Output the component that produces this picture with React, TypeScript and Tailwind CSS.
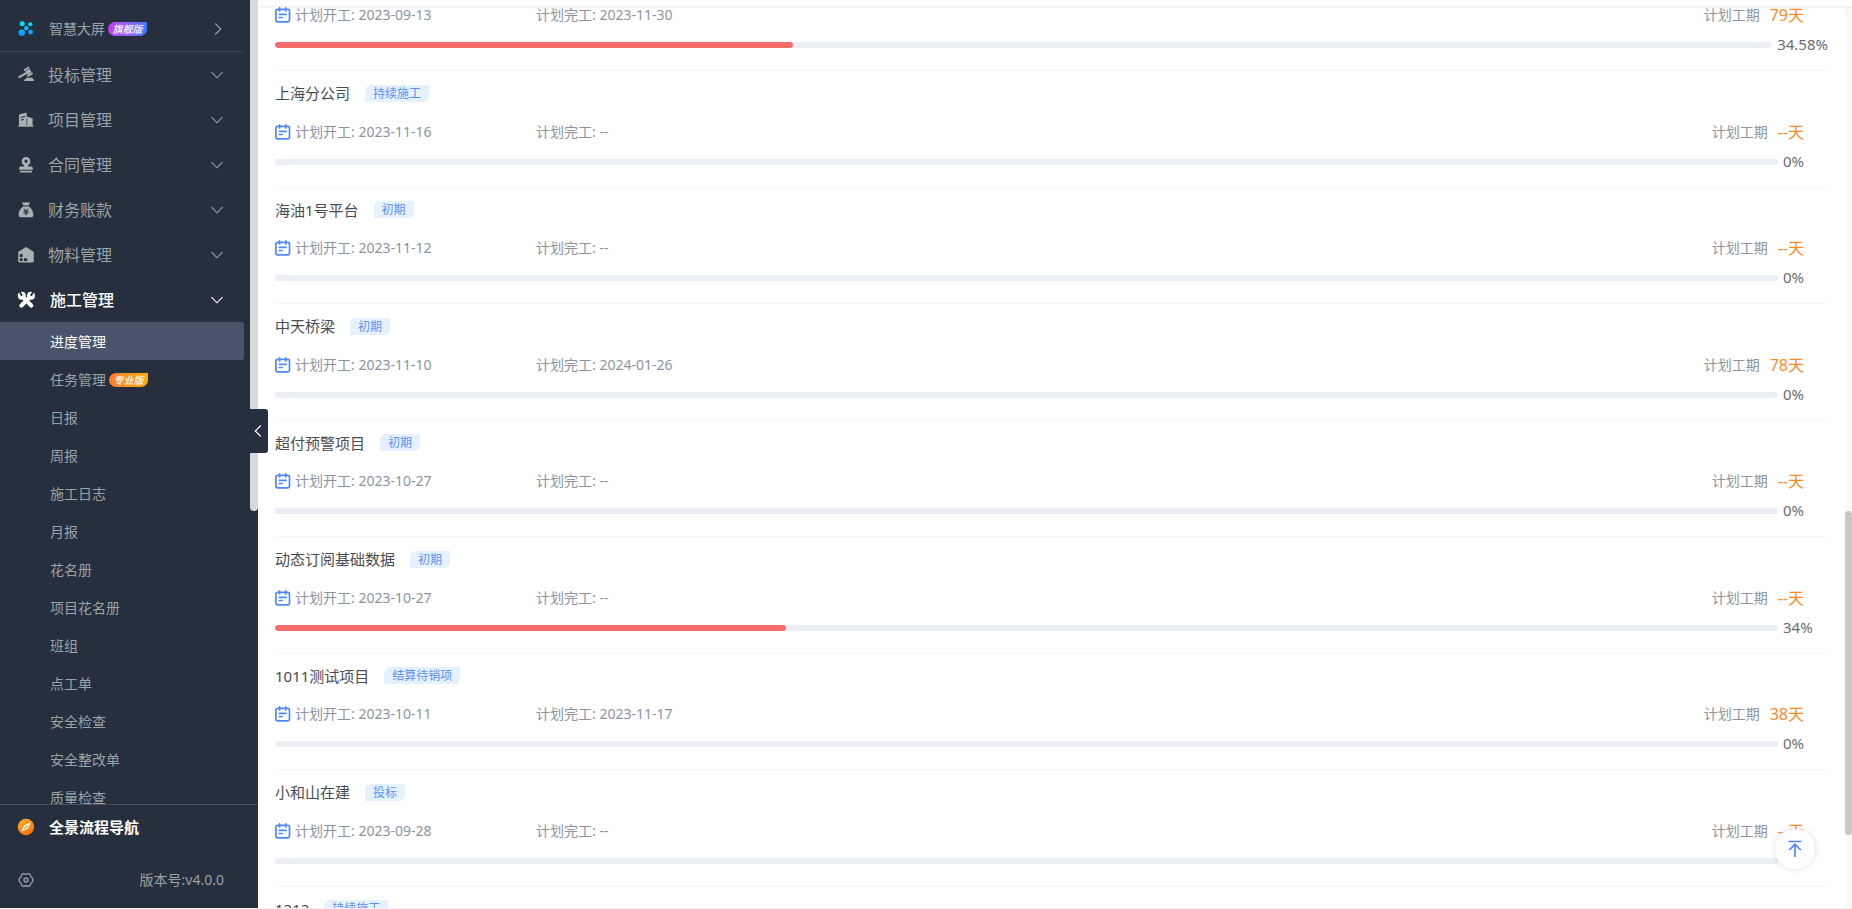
import React from "react";

const font = "font-['Noto_Sans','Noto_Sans_CJK_SC',sans-serif]";

function Chevron({ className = "size-3" }: { className?: string }) {
  return (
    <svg viewBox="0 0 12 12" className={className} fill="none" stroke="currentColor" strokeWidth="1.1" aria-hidden="true">
      <path d="M0.5 3.2 6 8.8 11.5 3.2" />
    </svg>
  );
}

const icons: Record<string, React.ReactNode> = {
  bid: (
    <g fill="currentColor">
      <g transform="rotate(-30 10.3 4.7)">
        <rect x="7.2" y="0.4" width="6.2" height="1.9" rx="0.6" />
        <rect x="7.8" y="2.7" width="5" height="4" />
        <rect x="7.2" y="7.1" width="6.2" height="1.9" rx="0.6" />
      </g>
      <path d="M8 4.900 9 7 1.700 10.900c-.6.200-1.100.100-1.400-.4-.2-.5 0-1 .4-1.300z" />
      <path d="M8.400 10.800h6l.6 1.400h.8v1.800H6.300v-1.800h1.400z" />
    </g>
  ),
  project: (
    <path fill="currentColor" fillRule="evenodd" d="M1 2.4 8.6.5v4.1l6 1.6v7.3h.8v1.300H.3v-1.300H1zM2.600 5v1l4.600-.9v-1zM2.600 7.500v1l3.400-.6v-1zM8.600 6v7.500h.6V6.200z" />
  ),
  contract: (
    <path fill="currentColor" fillRule="evenodd" d="M8 0a4.300 4.300 0 0 1 2.200 8L9.900 9.500h3.300c1 0 1.600.6 1.600 1.500v1.800H1.200V11c0-.9.600-1.500 1.600-1.500h3.300L5.800 8A4.300 4.300 0 0 1 8 0zm0 2.600a1.600 1.600 0 1 0 0 3.200 1.600 1.600 0 0 0 0-3.200zM2 13.800h12v1.600H2z" />
  ),
  finance: (
    <path fill="currentColor" fillRule="evenodd" d="M4 0 6 .7 8 0l2 .7L12 0l-1.300 3.500H5.300zM5 4.400h6c2.700 2 4.400 5 4.400 8.300 0 1.700-1 2.600-2.500 2.600H3.100C1.600 15.300.6 14.400.6 12.700.6 9.400 2.300 6.400 5 4.400zm.4 2.300L7 8.900H5.400v.9h2v.8h-2v.9h2v1.700h1.200v-1.700h2v-.9h-2v-.8h2v-.9H9l1.600-2.200H9.300L8 8.600 6.700 6.700z" />
  ),
  material: (
    <path fill="currentColor" fillRule="evenodd" d="M8 0 15.200 4.500c.4.200.6.500.6 1V14c0 .9-.5 1.400-1.400 1.400H1.600C.7 15.400.2 14.900.2 14V5.500c0-.5.2-.8.6-1zM1.800 7v3h2.800V7zM1.800 11.300V14h2.800v-2.700zM6 11.300V14h3.200v-2.700z" />
  ),
  build: (
    <g strokeLinecap="round">
      <path stroke="currentColor" strokeWidth="4.200" d="m4 4 9.300 9.600M12.800 4 3.400 13.600" />
      <circle cx="3.800" cy="3.700" r="4" fill="currentColor" />
      <circle cx="13" cy="3.700" r="4" fill="currentColor" />
      <path className="stroke-[#262f3e]" strokeWidth="2" strokeLinecap="butt" d="M4 3.700 1.300-.8M12.800 3.700 15.700-.8" />
    </g>
  ),
};

const menu = [
  { icon: "bid", label: "投标管理" },
  { icon: "project", label: "项目管理" },
  { icon: "contract", label: "合同管理" },
  { icon: "finance", label: "财务账款" },
  { icon: "material", label: "物料管理" },
  { icon: "build", label: "施工管理", open: true },
];

const submenu = [
  "进度管理", "任务管理", "日报", "周报", "施工日志", "月报", "花名册",
  "项目花名册", "班组", "点工单", "安全检查", "安全整改单", "质量检查",
];

type Project = { name?: string; stage?: string; start?: string; end?: string; days?: string; progress: number };

const projects: Project[] = [
  { start: "2023-09-13", end: "2023-11-30", days: "79", progress: 34.58 },
  { name: "上海分公司", stage: "持续施工", start: "2023-11-16", progress: 0 },
  { name: "海油1号平台", stage: "初期", start: "2023-11-12", progress: 0 },
  { name: "中天桥梁", stage: "初期", start: "2023-11-10", end: "2024-01-26", days: "78", progress: 0 },
  { name: "超付预警项目", stage: "初期", start: "2023-10-27", progress: 0 },
  { name: "动态订阅基础数据", stage: "初期", start: "2023-10-27", progress: 34 },
  { name: "1011测试项目", stage: "结算待销项", start: "2023-10-11", end: "2023-11-17", days: "38", progress: 0 },
  { name: "小和山在建", stage: "投标", start: "2023-09-28", progress: 0 },
  { name: "1212", stage: "持续施工", progress: 0 },
];

function Badge({ children, className }: { children: React.ReactNode; className: string }) {
  return (
    <span className={`flex h-[14px] w-[39px] items-center justify-center rounded-l-full rounded-br-full text-[10px] leading-none font-medium text-white italic ${className}`}>
      {children}
    </span>
  );
}

function Sidebar() {
  return (
    <aside className="relative flex h-full w-[258px] shrink-0 flex-col bg-[#262f3e] text-[#9aa3a6]">
      <nav className="min-h-0 flex-1 overflow-hidden">
        <a href="#screen" className="mr-[14px] flex h-[52px] items-center border-b border-[#3a4352] pt-1.5 pl-[18px] text-sm">
          <svg viewBox="0 0 16 16" className="mr-[15px] size-4" aria-hidden="true">
            <defs>
              <linearGradient id="dots" gradientUnits="userSpaceOnUse" x1="0" y1="0" x2="0" y2="16">
                <stop stopColor="#00f0ff" />
                <stop offset="1" stopColor="#0a8cff" />
              </linearGradient>
            </defs>
            <g fill="url(#dots)">
              <circle cx="4.200" cy="2.800" r="2.500" />
              <circle cx="12.200" cy="3.300" r="2.100" />
              <circle cx="8.300" cy="7.300" r="2.200" />
              <circle cx="3.800" cy="11.800" r="3.200" />
              <circle cx="12.600" cy="11.100" r="2.400" />
            </g>
          </svg>
          智慧大屏
          <Badge className="ml-[3px] bg-gradient-to-r from-[#c43df0] to-[#3478ff]">旗舰版</Badge>
          <Chevron className="mr-5 ml-auto size-3 -rotate-90" />
        </a>
        <ul>
          {menu.map((m) => (
            <li key={m.label}>
              <button type="button" className={`flex h-[45px] w-full items-center pl-[18px] text-left text-base ${m.open ? "font-medium text-white" : ""}`}>
                <svg viewBox="0 0 16 16" className="size-4 overflow-visible text-[#a8b0b1] in-[.font-medium]:text-white" aria-hidden="true">{icons[m.icon]}</svg>
                <span className={m.open ? "ml-4" : "ml-[14px]"}>{m.label}</span>
                <Chevron className="mr-[35px] ml-auto size-3" />
              </button>
            </li>
          ))}
        </ul>
        <ul>
          {submenu.map((s, i) => (
            <li key={s}>
              <a
                href={`#${s}`}
                className={`mr-[14px] flex h-[38px] items-center rounded-r-[3px] pt-0.5 pl-[50px] text-sm ${i === 0 ? "bg-[#49536a] text-white" : ""}`}
              >
                {s}
                {i === 1 && <Badge className="ml-[3px] bg-gradient-to-r from-[#ff7a2e] to-[#ffae00]">专业版</Badge>}
              </a>
            </li>
          ))}
        </ul>
      </nav>
      <div className="absolute top-0 right-0 h-[511px] w-2 rounded-b-full bg-[#d8d9db]" />
      <button type="button" aria-label="收起菜单" className="absolute top-[409px] -right-[10px] flex h-11 w-[18px] items-center justify-center rounded-r-[3px] bg-[#262f3e] pr-0.5 text-white">
        <Chevron className="size-3 rotate-90" />
      </button>
      <div className="h-[104px] shrink-0 border-t border-[#49515f]">
        <a href="#guide" className="flex h-11 items-center pl-[17px] text-[15px] font-bold text-white">
          <svg viewBox="0 0 18 18" className="mr-[14px] size-[18px]" aria-hidden="true">
            <defs>
              <linearGradient id="compass" x1="0" y1="0" x2="0.6" y2="1">
                <stop stopColor="#ffb01f" />
                <stop offset="1" stopColor="#ff7410" />
              </linearGradient>
            </defs>
            <circle cx="9" cy="9" r="8.200" fill="url(#compass)" />
            <path d="M13.800 4.200 7.200 7.200 4.400 13.600 10.900 10.800z" fill="#fff" />
            <path d="m7.600 10.600 3-3" stroke="#ff9018" strokeWidth="1.300" strokeLinecap="round" />
          </svg>
          全景流程导航
        </a>
        <div className="flex h-[59px] items-center justify-between pt-0.5 pr-[34px] pl-[18px] text-sm">
          <button type="button" aria-label="设置">
            <svg viewBox="0 0 16 16" className="size-4" fill="none" stroke="currentColor" strokeWidth="1.300" strokeLinejoin="round" aria-hidden="true">
              <path d="M5.700 1.500c1.200.8 3.400.8 4.600 0l2 1.100c0 1.700.9 3 2.400 3.900v3c-1.500.9-2.400 2.200-2.400 3.900l-2 1.100c-1.200-.8-3.400-.8-4.600 0l-2-1.100c0-1.700-.9-3-2.400-3.900v-3c1.500-.9 2.400-2.200 2.400-3.900z" />
              <circle cx="8" cy="8" r="2" />
            </svg>
          </button>
          <span>版本号:v4.0.0</span>
        </div>
      </div>
    </aside>
  );
}

function CalendarIcon() {
  return (
    <svg viewBox="0 0 16 16" className="mr-1 size-4 shrink-0" fill="none" stroke="#4d88ff" strokeWidth="1.700" strokeLinecap="round" aria-hidden="true">
      <rect x="0.900" y="2.300" width="13.600" height="12.600" rx="1.600" />
      <path d="M4.600.9v3M10.800.9v3M4.300 7.300h6.800M4.300 10.500h2.800" />
    </svg>
  );
}

function ProjectRow({ p }: { p: Project }) {
  return (
    <li className="border-b border-[#f5f6f8]">
      {p.name && (
        <div className="mb-4 flex items-center pt-[11px]">
          <h2 className="text-[15px] leading-normal text-[#484c54]">{p.name}</h2>
          <span className="ml-[15px] rounded-tl-md rounded-br-md bg-[#e6f1ff] px-2 text-xs leading-[17px] text-[#5b90ff]">{p.stage}</span>
        </div>
      )}
      <div className="flex h-[22px] items-center text-sm text-[#8b949f]">
        <span className="flex w-[261px] items-center">
          <CalendarIcon />
          计划开工: {p.start ?? "--"}
        </span>
        <span>计划完工: {p.end ?? "--"}</span>
        <span className="ml-auto">计划工期</span>
        <span className="mr-6 ml-[10px] text-base text-[#ff8a1f]">{p.days ?? "--"}天</span>
      </div>
      <div className="mt-2.5 mb-4 flex h-[18px] items-center">
        <div role="progressbar" aria-valuenow={p.progress} className="h-1.5 flex-1 overflow-hidden rounded-full bg-[#ebeef5]">
          <div className="h-full rounded-full bg-[#f56c6c]" style={{ width: `${p.progress}%` }} />
        </div>
        <span className="ml-[5px] min-w-[45px] self-start text-[15px] leading-4 text-[#6b6d71]">{p.progress}%</span>
      </div>
    </li>
  );
}

export default function App() {
  return (
    <div className={`h-screen bg-[#f5f5f5] pb-px ${font}`}>
      <div className="flex h-full bg-white">
        <Sidebar />
        <main className="relative flex min-w-0 flex-1 flex-col overflow-hidden">
          <header className="absolute inset-x-0 top-0 h-1.5 bg-white shadow-[0_1px_3px_rgba(0,0,0,0.08)]" />
          <div className="flex min-h-0 flex-1">
            <ul className="min-w-0 flex-1 overflow-hidden px-[17px] pt-1">
              {projects.map((p, i) => (
                <ProjectRow key={i} p={p} />
              ))}
            </ul>
            <div className="w-[7px] bg-[#f9f9f9] pt-[511px]">
              <div className="h-[324px] rounded-full bg-[#c8c8c8]" />
            </div>
          </div>
          <button type="button" aria-label="回到顶部" className="absolute right-[37px] bottom-[39px] flex size-10 items-center justify-center rounded-full bg-white shadow-[0_0_6px_rgba(0,0,0,0.14)]">
            <svg viewBox="0 0 16 18" className="h-[18px] w-4" fill="none" stroke="#4d88ff" strokeWidth="1.700" aria-hidden="true">
              <path d="M1.500 1.500h13M8 17V4.500M2.200 10 8 4.300l5.800 5.700" />
            </svg>
          </button>
        </main>
      </div>
    </div>
  );
}
